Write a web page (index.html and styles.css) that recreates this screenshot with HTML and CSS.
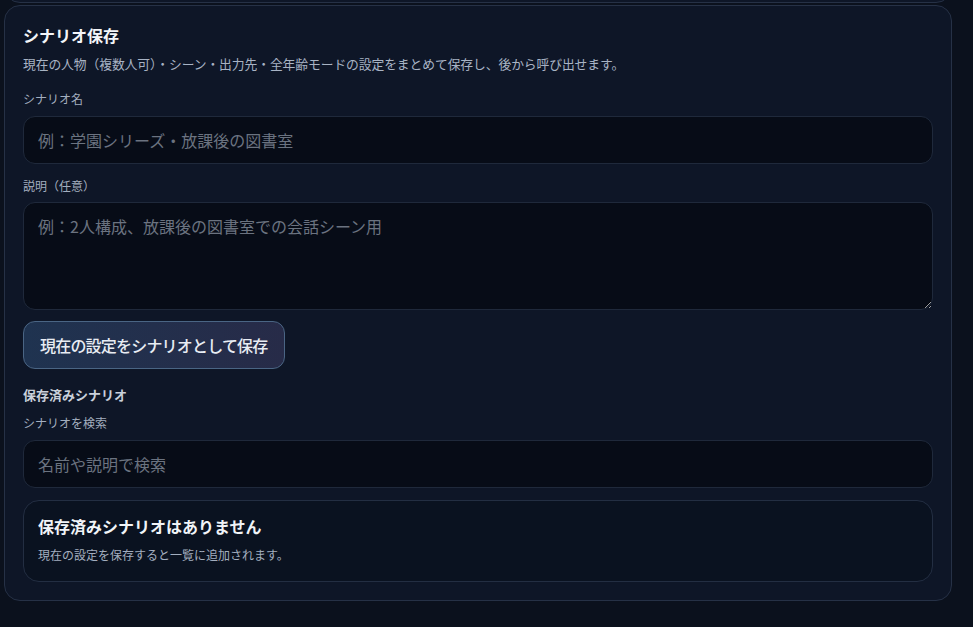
FILE: index.html
```html
<!DOCTYPE html>
<html lang="ja">

<head>
    <meta charset="UTF-8">
    <meta name="viewport" content="width=device-width, initial-scale=1.0">
    <title>シナリオ保存</title>
    <link rel="stylesheet" href="styles.css">
</head>

<body>
    <div class="stack">
        <!-- bottom of the panel above (scrolled) -->
        <section class="panel prev"></section>

        <section class="panel">
            <h2 class="panel-title">シナリオ保存</h2>
            <p class="panel-desc">現在の人物（複数人可）・シーン・出力先・全年齢モードの設定をまとめて保存し、後から呼び出せます。</p>

            <label class="field-label" for="scenario_name">シナリオ名</label>
            <input class="field" id="scenario_name" type="text" placeholder="例：学園シリーズ・放課後の図書室">

            <label class="field-label" for="scenario_desc">説明（任意）</label>
            <textarea class="field area" id="scenario_desc" placeholder="例：2人構成、放課後の図書室での会話シーン用"></textarea>

            <button class="save-btn">現在の設定をシナリオとして保存</button>

            <h3 class="sub-title">保存済みシナリオ</h3>
            <label class="field-label small" for="scenario_search">シナリオを検索</label>
            <input class="field" id="scenario_search" type="text" placeholder="名前や説明で検索">

            <div class="empty">
                <p class="empty-title">保存済みシナリオはありません</p>
                <p class="empty-text">現在の設定を保存すると一覧に追加されます。</p>
            </div>
        </section>
    </div>
</body>

</html>
```

FILE: styles.css
```css
* {
    margin: 0;
    padding: 0;
    box-sizing: border-box;
}

body {
    background: #0b111d;
    font-family: "Noto Sans CJK JP", "Noto Sans", sans-serif;
    color: #e5e9f0;
    height: 627px;
    overflow: hidden;
}

.stack {
    width: 948px;
    margin-left: 4px;
    margin-top: -97px;
    display: flex;
    flex-direction: column;
    gap: 2px;
}

.panel {
    background: #0e1627;
    border: 1px solid #263146;
    border-radius: 16px;
    padding: 17px 18px 18px 18px;
    display: flex;
    flex-direction: column;
}

.prev {
    height: 100px;
}

.panel-title {
    font-size: 16px;
    font-weight: 700;
    line-height: 24px;
    color: #f3f5f9;
}

.panel-desc {
    font-size: 12.8px;
    line-height: 18px;
    color: #a8b3c4;
    margin-top: 8px;
    letter-spacing: -0.1px;
}

.field-label {
    font-size: 12px;
    line-height: 18px;
    color: #a3aebf;
    margin-top: 17px;
    margin-bottom: 8px;
}

.field {
    background: #070c17;
    border: 1px solid #1f293b;
    border-radius: 12px;
    height: 48px;
    padding: 0 14px;
    font-family: inherit;
    font-size: 16px;
    color: #e5e9f0;
    outline: none;
}

.field::placeholder {
    color: #6b7380;
}

.area {
    height: 108px;
    padding-top: 11px;
    resize: vertical;
    line-height: 24px;
}

.panel .field + .field-label {
    margin-top: 13px;
    margin-bottom: 7px;
}

.save-btn {
    align-self: flex-start;
    margin-top: 11px;
    height: 48px;
    padding: 0 16px;
    border-radius: 12px;
    border: 1px solid #4a6584;
    background: linear-gradient(to right, #1f3350, #272b48);
    color: #e8ecf3;
    font-family: inherit;
    font-size: 16px;
    font-weight: 500;
    letter-spacing: -0.8px;
    white-space: nowrap;
}

.sub-title {
    font-size: 13px;
    font-weight: 700;
    line-height: 18px;
    color: #c9d0db;
    margin-top: 17px;
}

.field-label.small {
    margin-top: 10px;
}

.empty {
    margin-top: 12px;
    background: #0a1220;
    border: 1px solid #232e42;
    border-radius: 16px;
    padding: 13px 14px 17px 14px;
}

.empty-title {
    font-size: 16px;
    font-weight: 700;
    line-height: 24px;
    color: #f1f4f8;
}

.empty-text {
    font-size: 12px;
    line-height: 18px;
    color: #a3aebf;
    margin-top: 8px;
}
```
